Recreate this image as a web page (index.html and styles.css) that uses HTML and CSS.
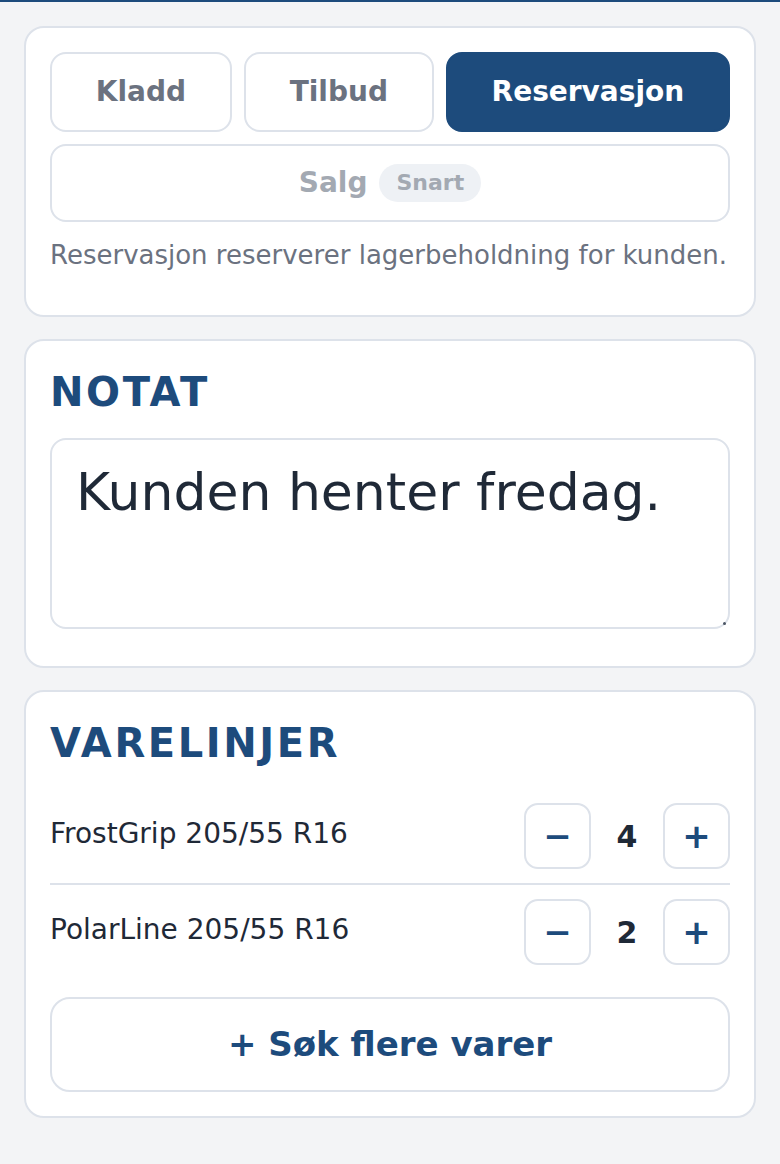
FILE: index.html
```html
<!DOCTYPE html>
<html lang="no">
<head>
<meta charset="utf-8">
<title>Ordre</title>
<link rel="stylesheet" href="styles.css">
</head>
<body>
<div class="topbar"></div>
<main class="page">
  <section class="card card-type">
    <div class="type-row">
      <button class="type-btn">Kladd</button>
      <button class="type-btn">Tilbud</button>
      <button class="type-btn active">Reservasjon</button>
    </div>
    <button class="type-btn disabled"><span class="salg">Salg</span><span class="badge">Snart</span></button>
    <p class="desc">Reservasjon reserverer lagerbeholdning for kunden.</p>
  </section>

  <section class="card">
    <h2 class="card-title">NOTAT</h2>
    <div class="note-wrap">
      <textarea class="note">Kunden henter fredag.</textarea>
    </div>
  </section>

  <section class="card">
    <h2 class="card-title">VARELINJER</h2>
    <div class="lines">
      <div class="line">
        <span class="line-name">FrostGrip 205/55 R16</span>
        <div class="qty">
          <button class="qty-btn">−</button>
          <span class="qty-val">4</span>
          <button class="qty-btn">+</button>
        </div>
      </div>
      <div class="line">
        <span class="line-name">PolarLine 205/55 R16</span>
        <div class="qty">
          <button class="qty-btn">−</button>
          <span class="qty-val">2</span>
          <button class="qty-btn">+</button>
        </div>
      </div>
    </div>
    <button class="search-btn">+ Søk flere varer</button>
  </section>
</main>
</body>
</html>
```

FILE: styles.css
```css
* { box-sizing: border-box; }

html, body {
  margin: 0;
  padding: 0;
  background: #f3f4f6;
  font-family: "DejaVu Sans", "Liberation Sans", sans-serif;
  color: #1f2937;
}

.topbar {
  height: 2px;
  background: #1d4b7c;
}

.page {
  padding: 24px 24px;
  display: flex;
  flex-direction: column;
  gap: 22px;
}

.card {
  background: #ffffff;
  border: 2px solid #dde2ea;
  border-radius: 20px;
  padding: 24px;
}

button {
  font-family: inherit;
  cursor: pointer;
}

.type-row {
  display: flex;
  gap: 12px;
  margin-bottom: 12px;
}

.type-btn {
  flex: 1 1 auto;
  background: #ffffff;
  border: 2px solid #dde2ea;
  border-radius: 16px;
  padding: 22px 20px;
  font-size: 28px;
  line-height: 32px;
  font-weight: bold;
  color: #6b7280;
}

.type-btn.active {
  background: #1d4b7c;
  border-color: #1d4b7c;
  color: #ffffff;
}

.type-btn.disabled {
  width: 100%;
  display: flex;
  align-items: center;
  justify-content: center;
  gap: 12px;
  padding: 18px 20px;
  color: #a3a9b2;
  cursor: default;
}

.badge {
  background: #eef1f5;
  border-radius: 999px;
  padding: 6px 17px;
  font-size: 22px;
  line-height: 26px;
  font-weight: bold;
  color: #a3a9b2;
}

.desc {
  margin: 18px 0 21px;
  font-size: 26px;
  line-height: 30px;
  color: #6b7280;
}

.card-title {
  margin: 3px 0 22px;
  font-size: 40px;
  line-height: 48px;
  font-weight: bold;
  letter-spacing: 0.065em;
  color: #1d4b7c;
}

.note-wrap {
  position: relative;
  margin: 0 0 13px;
}

.note-wrap::after {
  content: "";
  position: absolute;
  right: 4px;
  bottom: 4px;
  width: 3px;
  height: 3px;
  border-radius: 50%;
  background: #4b5563;
}

.note {
  display: block;
  width: 100%;
  height: 191px;
  margin: 0;
  border: 2px solid #dde2ea;
  border-radius: 16px;
  padding: 22px 24px;
  font-family: inherit;
  font-size: 52px;
  color: #1f2937;
  background: #ffffff;
  resize: none;
  outline: none;
}

.line {
  display: flex;
  align-items: center;
  justify-content: space-between;
  padding: 14px 0;
}

.line + .line {
  border-top: 2px solid #dde2ea;
}

.line-name {
  font-size: 28px;
  color: #1f2937;
  padding-bottom: 6px;
}

.qty {
  display: flex;
  align-items: center;
  gap: 12px;
}

.qty-btn {
  width: 67px;
  height: 66px;
  padding: 0;
  background: #ffffff;
  border: 2px solid #dde2ea;
  border-radius: 14px;
  font-size: 34px;
  font-weight: bold;
  color: #1d4b7c;
  line-height: 1;
}

.qty-val {
  width: 48px;
  text-align: center;
  font-size: 30px;
  font-weight: bold;
  color: #1f2937;
}

.search-btn {
  display: block;
  width: 100%;
  margin-top: 18px;
  background: #ffffff;
  border: 2px solid #dde2ea;
  border-radius: 20px;
  padding: 26px 20px;
  font-size: 34px;
  line-height: 39px;
  font-weight: bold;
  color: #1d4b7c;
}
```
